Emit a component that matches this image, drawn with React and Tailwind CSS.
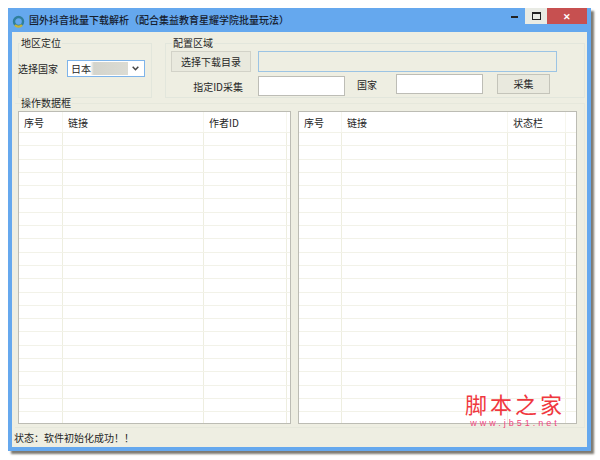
const rows = Array.from({ length: 22 });

const DataTable = ({ className, cols, headers }) => (
  <div className={`h-[313px] border border-[#bcbcb4] bg-white overflow-hidden ${className}`}>
    <div className="flex h-[20px] bg-white">
      {headers.map((h, i) => (
        <div key={i} style={{ width: cols[i] }} className="shrink-0 h-full pl-[5px] border-r border-[#f6f6ee] text-[10px] leading-[22px] whitespace-nowrap">
          {h}
        </div>
      ))}
    </div>
    {rows.map((_, r) => (
      <div key={r} className="flex h-[13.3px] border-t border-[#f2f2e8]">
        {cols.map((w, i) => (
          <div key={i} style={{ width: w }} className="shrink-0 h-full border-r border-[#eeeee0]" />
        ))}
      </div>
    ))}
  </div>
);

export default function App() {
  return (
    <div className="w-[600px] h-[460px] bg-white pl-[8px] pt-[8px] text-[#262626] font-['Noto_Sans_CJK_SC',sans-serif]">
      <div className="w-[583px] h-[443px] flex flex-col bg-[#65a8ee] shadow-[3px_3px_2px_#7d7a72]">
        {/* Title bar */}
        <div className="h-[24px] flex items-center shrink-0 pl-[4px]">
          <svg width="13" height="13" viewBox="0 0 13 13" className="shrink-0 mr-[4px] mt-[3px]">
            <circle cx="6.5" cy="6.5" r="4.5" fill="none" stroke="#2f7f9c" strokeWidth="2.4" />
            <path d="M3 10a4.5 4.5 0 0 0 7 0" fill="none" stroke="#c4b43c" strokeWidth="2.4" />
          </svg>
          <span className="text-[10px] leading-none text-[#16202e] font-medium whitespace-nowrap">
            国外抖音批量下载解析（配合集益教育星耀学院批量玩法）
          </span>
          <div className="ml-auto flex items-start self-start">
            <div className="w-[22px] h-[16px] flex items-center justify-center">
              <div className="w-[7px] h-[2px] bg-[#222] mt-[2px]" />
            </div>
            <div className="w-[22px] h-[16px] bg-[#e9ebe4] flex items-center justify-center">
              <div className="w-[9px] h-[8px] border border-[#222] border-t-2" />
            </div>
            <div className="w-[40px] h-[16px] bg-[#c75050] flex items-center justify-center text-white text-[9px] font-bold leading-none">
              ✕
            </div>
            <div className="w-[4px]" />
          </div>
        </div>

        {/* Client area */}
        <div className="relative flex-1 mx-[4px] mb-[4px] bg-[#eeeee2] flex flex-col pl-[6px] text-[10px]">
          <div className="flex h-[71px] pt-[4px] shrink-0">
            <fieldset className="w-[134px] h-[62px] border border-[#e2e6dc]">
              <legend className="text-[10px] leading-[14px] ml-[1px] px-[1px]">地区定位</legend>
              <div className="flex items-center mt-[10px] -ml-[1px]">
                <span className="w-[40px] whitespace-nowrap">选择国家</span>
                <div className="w-[78px] h-[17px] ml-[9px] border border-[#7eb4ea] bg-white flex items-center pl-[1px] pr-[1px]">
                  <div className="flex-1 h-[13px] pl-[2px] flex items-center leading-none bg-gradient-to-r from-white from-[36%] via-[#d4d4cc] via-[42%] to-[#dcdcd4]">日本</div>
                  <svg width="7" height="5" viewBox="0 0 7 5" className="mx-[4px]">
                    <path d="M.7.7l2.8 3 2.8-3" fill="none" stroke="#444" strokeWidth="1.5" />
                  </svg>
                </div>
              </div>
            </fieldset>
            <fieldset className="w-[420px] h-[62px] ml-[13px] border border-[#e2e6dc] pl-[5px]">
              <legend className="text-[10px] leading-[14px] ml-[1px] px-[1px]">配置区域</legend>
              <div className="flex items-start mt-[1px]">
                <button className="w-[80px] h-[21px] border border-[#d2d2c8] bg-[#e9e9de] text-[10px] leading-none">选择下载目录</button>
                <div className="w-[299px] h-[21px] ml-[7px] border border-[#9cc4e4]" />
              </div>
              <div className="flex items-start mt-[2px]">
                <span className="w-[72px] text-right mt-[6px] leading-[14px] whitespace-nowrap">指定ID采集</span>
                <div className="w-[87px] h-[20px] ml-[15px] mt-[2px] border border-[#bdbdb6] bg-white" />
                <span className="ml-[12px] mt-[4px] leading-[14px]">国家</span>
                <div className="w-[87px] h-[20px] ml-[19px] border border-[#bdbdb6] bg-white" />
                <button className="w-[53px] h-[20px] ml-[14px] border border-[#c4c4ba] bg-[#e9e9de] text-[10px] leading-none">采集</button>
              </div>
            </fieldset>
          </div>

          {/* 操作数据框 group */}
          <fieldset className="h-[332px] -ml-[3px] w-[570px] border border-[#e6e8dc] border-l-0 shrink-0 -mt-[7px] pl-[3px]">
            <legend className="text-[10px] leading-[14px] ml-[2px] px-[1px]">操作数据框</legend>
            <div className="flex mt-[1px]">
              <DataTable className="w-[273px]" cols={[44, 141, 83]} headers={["序号", "链接", "作者ID"]} />
              <DataTable className="w-[279px] ml-[7px]" cols={[43, 166, 58]} headers={["序号", "链接", "状态栏"]} />
            </div>
          </fieldset>

          <div className="flex-1 flex items-center -ml-[4px]">
            <span className="leading-[14px]">状态：软件初始化成功！！</span>
          </div>

          {/* Watermark */}
          <div className="absolute left-[453px] top-[359px] w-[100px] text-center">
            <div className="text-[22px] leading-[24px] text-[#f0383f] tracking-[3px] whitespace-nowrap">脚本之家</div>
            <div className="text-[9px] leading-[10px] mt-[3px] text-[#f0487f] tracking-[3px] whitespace-nowrap font-['Liberation_Sans',sans-serif]">www.jb51.net</div>
          </div>
        </div>
      </div>
    </div>
  );
}
